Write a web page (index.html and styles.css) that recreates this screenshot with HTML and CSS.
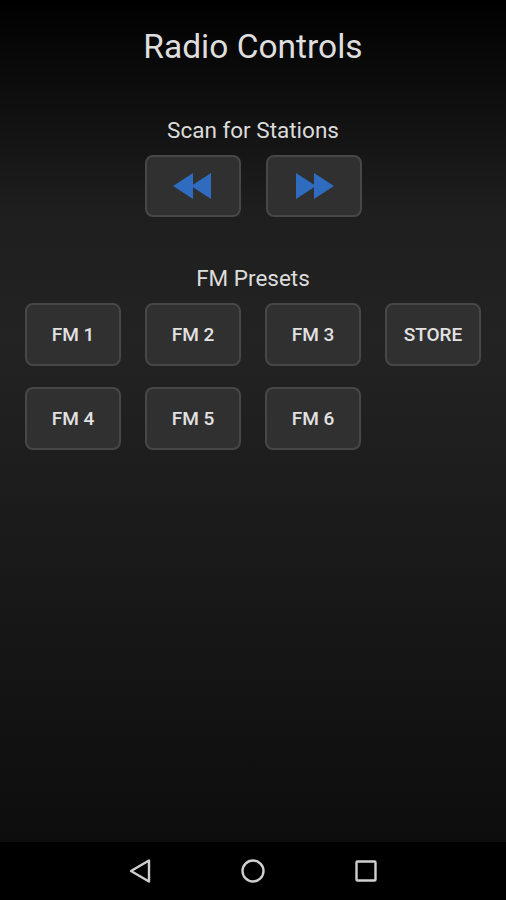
FILE: index.html
```html
<!DOCTYPE html>
<html lang="en">
<head>
  <meta charset="UTF-8">
  <title>Radio Controls</title>
  <link rel="stylesheet" href="styles.css">
</head>
<body>
<div class="screen">
  <div class="content">
    <h1 class="title">Radio Controls</h1>

    <div class="label scan-label">Scan for Stations</div>
    <div class="scan-row">
      <button class="btn">
        <svg width="40" height="26" viewBox="0 0 40 26">
          <polygon points="0,13 20,0 20,26" fill="#2f6bbf"/>
          <polygon points="18,13 38,0 38,26" fill="#2f6bbf"/>
        </svg>
      </button>
      <button class="btn">
        <svg width="40" height="26" viewBox="0 0 40 26">
          <polygon points="2,0 22,13 2,26" fill="#2f6bbf"/>
          <polygon points="20,0 40,13 20,26" fill="#2f6bbf"/>
        </svg>
      </button>
    </div>

    <div class="label presets-label">FM Presets</div>
    <div class="presets">
      <button class="btn">FM 1</button>
      <button class="btn">FM 2</button>
      <button class="btn">FM 3</button>
      <button class="btn">STORE</button>
      <button class="btn">FM 4</button>
      <button class="btn">FM 5</button>
      <button class="btn">FM 6</button>
    </div>
  </div>

  <div class="navbar">
    <svg width="24" height="26" viewBox="0 0 24 26">
      <polygon points="3,13 21,2.5 21,23.5" fill="none" stroke="#cfcfcf" stroke-width="2.4" stroke-linejoin="round"/>
    </svg>
    <svg width="26" height="26" viewBox="0 0 26 26">
      <circle cx="13" cy="13" r="10.5" fill="none" stroke="#cfcfcf" stroke-width="2.4"/>
    </svg>
    <svg width="24" height="24" viewBox="0 0 24 24">
      <rect x="2.5" y="2.5" width="19" height="19" rx="1" fill="none" stroke="#cfcfcf" stroke-width="2.4"/>
    </svg>
  </div>
</div>
</body>
</html>
```

FILE: styles.css
```css
body {
  margin: 0;
  font-family: Roboto, 'Noto Sans', sans-serif;
  background: #000;
}

.screen {
  width: 506px;
  height: 900px;
  display: flex;
  flex-direction: column;
}

.content {
  height: 842px;
  display: flex;
  flex-direction: column;
  align-items: center;
  background: linear-gradient(to bottom, #000 0%, #0a0a0a 8%, #1e1e1e 25%, #232323 40%, #1a1a1a 65%, #0d0d0d 100%);
}

.title {
  margin: 27px 0 0;
  font-size: 33.5px;
  line-height: 40px;
  font-weight: 400;
  color: #dedede;
}

.label {
  font-size: 22.5px;
  line-height: 26px;
  color: #dcdcdc;
}

.scan-label { margin-top: 50px; }

.scan-row {
  display: flex;
  gap: 25px;
  margin-top: 12px;
}

.presets-label { margin-top: 48px; }

.presets {
  display: grid;
  grid-template-columns: repeat(4, 96px);
  column-gap: 24px;
  row-gap: 21px;
  margin-top: 12px;
}

.btn {
  width: 96px;
  height: 63px;
  display: flex;
  align-items: center;
  justify-content: center;
  background: #303030;
  border: 2px solid #474747;
  border-radius: 8px;
  color: #e2e2e2;
  font-family: Roboto, 'Noto Sans', sans-serif;
  font-size: 19px;
  font-weight: 500;
  padding: 0;
}

.scan-row .btn { height: 62px; }

.navbar {
  height: 58px;
  background: #000;
  display: flex;
  align-items: center;
  justify-content: center;
  gap: 88px;
}
```
